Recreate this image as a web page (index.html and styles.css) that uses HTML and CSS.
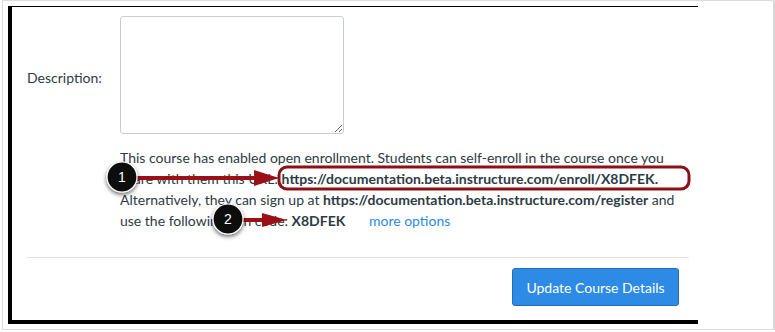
FILE: index.html
```html
<!DOCTYPE html>
<html lang="en">
<head>
  <meta charset="utf-8">
  <title>Course Details</title>
  <link rel="stylesheet" href="styles.css">
</head>
<body>
  <div class="shot">
    <div class="frame">
      <!-- Description -->
      <div class="field-row">
        <label class="field-label" for="course-description">Description:</label>
        <textarea id="course-description" class="field-textarea"></textarea>
      </div>

      <!-- Self enrollment -->
      <p class="enroll-note">
        This course has enabled open enrollment. Students can self-enroll in the course once you
        share with them this URL: <b>https://documentation.beta.instructure.com/enroll/X8DFEK.</b>
        Alternatively, they can sign up at <b>https://documentation.beta.instructure.com/register</b> and
        use the following join code: <b>X8DFEK</b> <a class="more-link" href="#">more options</a>
      </p>

      <div class="form-actions">
        <button class="btn-primary" type="button">Update Course Details</button>
      </div>
    </div>

    <!-- Callouts -->
    <svg class="callouts" width="775" height="332" viewBox="0 0 775 332">
      <defs>
        <filter id="drop" x="-50%" y="-50%" width="200%" height="200%">
          <feDropShadow dx="0" dy="2" stdDeviation="2" flood-color="#000" flood-opacity="0.6"/>
        </filter>
      </defs>
      <rect x="279" y="167" width="410" height="22" rx="8" fill="none" stroke="#8c1016" stroke-width="3"/>

      <line x1="130" y1="178" x2="258" y2="178" stroke="#9b1016" stroke-width="4"/>
      <polygon points="254,170 279,178 254,186" fill="#9b1016"/>
      <line x1="236" y1="220" x2="266" y2="220" stroke="#9b1016" stroke-width="4"/>
      <polygon points="262,213 287,220 262,227" fill="#9b1016"/>

      <g filter="url(#drop)">
        <circle cx="122" cy="177" r="15" fill="#111" stroke="#fff" stroke-width="1.2"/>
        <circle cx="228" cy="219" r="15" fill="#111" stroke="#fff" stroke-width="1.2"/>
      </g>
      <text x="122" y="182" class="callout-num">1</text>
      <text x="228" y="224" class="callout-num">2</text>
    </svg>
  </div>
</body>
</html>
```
FILE: styles.css
```css
:root {
  --text: #2d3b45;
  --link: #2d8ae3;
  --btn: #2d8be6;
  --btn-border: #1f6fbd;
  --rule: #e2e4e6;
  --font: 'Lato', 'Liberation Sans', sans-serif;
}
*, *::before, *::after { box-sizing: border-box; }
body { margin: 0; background: #fff; font-family: var(--font); color: var(--text); }

.shot {
  position: relative;
  width: 772px;
  height: 330px;
  margin-left: 2px;
  border: 1px solid #dcdcdc;
  box-shadow: 1px 1px 2px rgba(0,0,0,0.25);
  padding: 5px 0 0 5px;
}
.frame {
  width: 690px;
  height: 318px;
  border-left: 4px solid #000;
  border-top: 1px solid #000;
  border-bottom: 4px solid #000;
  padding: 9px 9px 0 15px;
}

.field-row { display: flex; align-items: center; }
.field-label { width: 93px; font-size: 14px; padding-top: 4px; }
.field-textarea {
  width: 224px;
  height: 118px;
  border: 1px solid #c7cdd1;
  border-radius: 3px;
  font-family: var(--font);
}

.enroll-note {
  margin: 13px 0 0 93px;
  font-size: 14px;
  line-height: 21px;
}
.enroll-note b { font-weight: 700; }
.more-link { color: var(--link); text-decoration: none; margin-left: 20px; }

.form-actions {
  margin-top: 26px;
  border-top: 1px solid var(--rule);
  padding: 10px 10px 0 0;
  display: flex;
  justify-content: flex-end;
}
.btn-primary {
  width: 167px;
  height: 38px;
  background: var(--btn);
  border: 1px solid var(--btn-border);
  border-radius: 3px;
  color: #fff;
  font-family: var(--font);
  font-size: 14px;
  cursor: pointer;
}

.callouts { position: absolute; left: -3px; top: -1px; pointer-events: none; }
.callout-num { fill: #fff; font-family: 'Liberation Sans', sans-serif; font-size: 14px; text-anchor: middle; }
```
